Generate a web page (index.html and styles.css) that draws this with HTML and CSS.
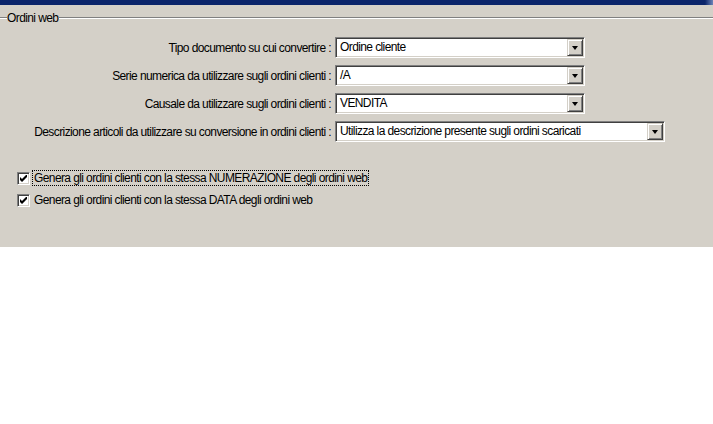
FILE: index.html
```html
<!DOCTYPE html>
<html lang="it">
<head>
<meta charset="utf-8">
<title>Ordini web</title>
<link rel="stylesheet" href="styles.css">
</head>
<body>
<div class="titlebar"><span class="tb-end"></span></div>
<div class="panel">
  <div class="group-head">
    <span class="line short"></span>
    <span class="legend">Ordini web</span>
    <span class="line grow"></span>
  </div>
  <div class="form">
    <label class="lbl">Tipo documento su cui convertire :</label>
    <div class="combo w250"><span class="val">Ordine cliente</span><span class="btn"><span class="arrow"></span></span></div>
    <label class="lbl">Serie numerica da utilizzare sugli ordini clienti :</label>
    <div class="combo w250"><span class="val">/A</span><span class="btn"><span class="arrow"></span></span></div>
    <label class="lbl">Causale da utilizzare sugli ordini clienti :</label>
    <div class="combo w250"><span class="val">VENDITA</span><span class="btn"><span class="arrow"></span></span></div>
    <label class="lbl">Descrizione articoli da utilizzare su conversione in ordini clienti :</label>
    <div class="combo w330"><span class="val">Utilizza la descrizione presente sugli ordini scaricati</span><span class="btn"><span class="arrow"></span></span></div>
  </div>
  <div class="checks">
    <div class="chk-row">
      <span class="box"><svg width="7" height="7" viewBox="0 0 7 7"><path d="M0 2 L0 5 L2 7 L7 2 L7 -1 L2 4 Z" fill="#000"/></svg></span>
      <span class="chk-text focus">Genera gli ordini clienti con la stessa NUMERAZIONE degli ordini web</span>
    </div>
    <div class="chk-row">
      <span class="box"><svg width="7" height="7" viewBox="0 0 7 7"><path d="M0 2 L0 5 L2 7 L7 2 L7 -1 L2 4 Z" fill="#000"/></svg></span>
      <span class="chk-text">Genera gli ordini clienti con la stessa DATA degli ordini web</span>
    </div>
  </div>
</div>
</body>
</html>
```
FILE: styles.css
```css
html, body {
  margin: 0;
  padding: 0;
  background: #ffffff;
}
body {
  font-family: "Liberation Sans", Arial, sans-serif;
  font-size: 12px;
  letter-spacing: -0.6px;
  color: #000;
  width: 713px;
  height: 424px;
  overflow: hidden;
}
.titlebar {
  height: 5px;
  background: #0a246a;
  display: flex;
  justify-content: flex-end;
}
.tb-end {
  width: 8px;
  background: linear-gradient(90deg, #0a246a, #6c84b8);
}
.panel {
  background: #d4d0c8;
  height: 242px;
  padding-top: 6px;
  box-sizing: border-box;
}
.group-head {
  display: flex;
  align-items: center;
  height: 14px;
}
.line {
  border-top: 1px solid #808080;
  border-bottom: 1px solid #ffffff;
  height: 0;
}
.line.short { width: 7px; }
.line.grow { flex: 1; }
.legend {
  padding: 0 1px 0 0;
  line-height: 14px;
}
.form {
  display: grid;
  grid-template-columns: 331px auto;
  column-gap: 4px;
  row-gap: 7px;
  margin-top: 12px;
  align-items: center;
}
.lbl {
  text-align: right;
  white-space: nowrap;
}
.combo {
  height: 21px;
  box-sizing: border-box;
  background: #fff;
  border-top: 1px solid #808080;
  border-left: 1px solid #808080;
  border-bottom: 1px solid #ffffff;
  border-right: 1px solid #ffffff;
  box-shadow: inset 1px 1px 0 #404040, inset -1px -1px 0 #d4d0c8;
  display: flex;
  align-items: stretch;
  padding: 1px;
}
.w250 { width: 250px; }
.w330 { width: 330px; }
.val {
  flex: 1;
  padding-left: 3px;
  line-height: 17px;
  white-space: nowrap;
  overflow: hidden;
}
.btn {
  width: 16px;
  height: 17px;
  box-sizing: border-box;
  background: #d4d0c8;
  border-top: 1px solid #d4d0c8;
  border-left: 1px solid #d4d0c8;
  border-right: 1px solid #404040;
  border-bottom: 1px solid #404040;
  box-shadow: inset 1px 1px 0 #ffffff, inset -1px -1px 0 #808080;
  display: flex;
  align-items: center;
  justify-content: center;
}
.arrow {
  width: 0;
  height: 0;
  border-left: 3.5px solid transparent;
  border-right: 3.5px solid transparent;
  border-top: 4px solid #000;
  margin-top: 1px;
}
.checks {
  margin-top: 28px;
  padding-left: 17px;
  display: flex;
  flex-direction: column;
  gap: 6px;
}
.chk-row {
  display: flex;
  align-items: center;
  height: 16px;
}
.box {
  width: 13px;
  height: 13px;
  box-sizing: border-box;
  background: #fff;
  border-top: 1px solid #808080;
  border-left: 1px solid #808080;
  border-bottom: 1px solid #ffffff;
  border-right: 1px solid #ffffff;
  box-shadow: inset 1px 1px 0 #404040, inset -1px -1px 0 #d4d0c8;
  display: flex;
  align-items: center;
  justify-content: center;
  margin-right: 2px;
}
.chk-text {
  padding: 0 1px;
  line-height: 14px;
  border: 1px dotted transparent;
  white-space: nowrap;
}
.chk-text.focus {
  border-color: #000;
}
```
